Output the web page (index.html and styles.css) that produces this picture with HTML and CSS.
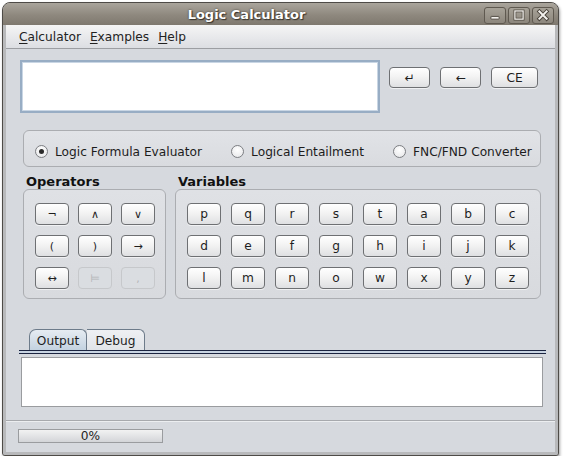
FILE: index.html
```html
<!DOCTYPE html>
<html>
<head>
<meta charset="utf-8">
<title>Logic Calculator</title>
<link rel="stylesheet" href="styles.css">
</head>
<body>
<div class="window">
  <div class="titlebar">
    <div class="title">Logic Calculator</div>
    <div class="wbtns">
      <span class="wbtn"><svg width="22" height="17" viewBox="0 0 22 17"><rect x="6.5" y="9.5" width="9" height="3" rx="0.5" fill="#f4f2ee" stroke="#4a443c"/></svg></span>
      <span class="wbtn"><svg width="22" height="17" viewBox="0 0 22 17"><rect x="6.5" y="3.5" width="9" height="9" fill="none" stroke="#4a443c" stroke-width="3"/><rect x="6.5" y="3.5" width="9" height="9" fill="none" stroke="#f4f2ee" stroke-width="1.4"/></svg></span>
      <span class="wbtn"><svg width="22" height="17" viewBox="0 0 22 17"><path d="M7 4 L15 12 M15 4 L7 12" stroke="#4a443c" stroke-width="4.2" stroke-linecap="square"/><path d="M7 4 L15 12 M15 4 L7 12" stroke="#f4f2ee" stroke-width="2.2" stroke-linecap="square"/></svg></span>
    </div>
  </div>
  <div class="frame">
    <div class="client">
      <div class="menubar">
        <span class="mi"><u>C</u>alculator</span>
        <span class="mi"><u>E</u>xamples</span>
        <span class="mi"><u>H</u>elp</span>
      </div>
      <div class="content">
        <div class="row1">
          <div class="input"></div>
          <div class="topbtns">
            <div class="btn w41">↵</div>
            <div class="btn w41">←</div>
            <div class="btn w47">CE</div>
          </div>
        </div>
        <div class="modes">
          <div class="radio"><span class="dot on"></span><span>Logic Formula Evaluator</span></div>
          <div class="radio"><span class="dot"></span><span>Logical Entailment</span></div>
          <div class="radio"><span class="dot"></span><span>FNC/FND Converter</span></div>
        </div>
        <div class="pads">
          <div class="col ops">
            <div class="lbl">Operators</div>
            <div class="panel grid3">
              <div class="btn sym">¬</div><div class="btn sym">∧</div><div class="btn sym">∨</div>
              <div class="btn sym">(</div><div class="btn sym">)</div><div class="btn sym">→</div>
              <div class="btn sym">↔</div><div class="btn dis">⊨</div><div class="btn dis">,</div>
            </div>
          </div>
          <div class="col vars">
            <div class="lbl">Variables</div>
            <div class="panel grid8">
              <div class="btn">p</div><div class="btn">q</div><div class="btn">r</div><div class="btn">s</div><div class="btn">t</div><div class="btn">a</div><div class="btn">b</div><div class="btn">c</div>
              <div class="btn">d</div><div class="btn">e</div><div class="btn">f</div><div class="btn">g</div><div class="btn">h</div><div class="btn">i</div><div class="btn">j</div><div class="btn">k</div>
              <div class="btn">l</div><div class="btn">m</div><div class="btn">n</div><div class="btn">o</div><div class="btn">w</div><div class="btn">x</div><div class="btn">y</div><div class="btn">z</div>
            </div>
          </div>
        </div>
        <div class="tabs">
          <div class="tab sel">Output</div>
          <div class="tab">Debug</div>
        </div>
        <div class="tabline"></div>
        <div class="output"></div>
      </div>
      <div class="status">
        <div class="progress">0%</div>
      </div>
    </div>
  </div>
</div>
</body>
</html>
```
FILE: styles.css
```css
* { box-sizing: border-box; }
html, body { margin: 0; padding: 0; background: #ffffff; }
body { font-family: "DejaVu Sans", "Liberation Sans", sans-serif; font-size: 12.2px; color: #1c1c1c; }

.window {
  margin: 2px 0 0 2px;
  width: 557px;
  height: 454px;
  border: 1px solid #4e4b47;
  border-radius: 8px 8px 3px 3px;
  overflow: hidden;
  display: flex;
  flex-direction: column;
  box-shadow: 1px 2px 3px rgba(0,0,0,0.35);
  background: #b3b3b3;
}

.titlebar {
  height: 22px;
  flex: none;
  display: flex;
  align-items: center;
  background: linear-gradient(#aaa59c, #8e887e 55%, #7f796f);
  position: relative;
}
.title {
  flex: 1;
  text-align: center;
  font-weight: bold;
  font-size: 13px;
  color: #ffffff;
  text-shadow: 0 0 2px #3a352e, 1px 1px 1px #3a352e;
  padding-left: 6px;
  padding-top: 1px;
}
.wbtns { display: flex; gap: 2px; padding-right: 4px; padding-top: 2px; }
.wbtn {
  width: 22px;
  height: 17px;
  border: 1px solid #5f5950;
  border-radius: 3px;
  background: linear-gradient(#a7a298, #8d877d);
  display: flex;
  align-items: center;
  justify-content: center;
}
.wbtn svg { display: block; }

.frame {
  flex: 1;
  display: flex;
  padding: 0 3px 3px 3px;
  background: #b8b9bb;
}
.client {
  flex: 1;
  display: flex;
  flex-direction: column;
  background: #d6d9de;
}

.menubar {
  height: 24px;
  flex: none;
  display: flex;
  align-items: center;
  gap: 9px;
  padding-left: 13px;
  background: linear-gradient(#f5f5f5, #e6e7ea 60%, #dcdee2);
  border-bottom: 1px solid #9c9ea2;
  color: #222;
}
.mi u { text-decoration: underline; text-underline-offset: 2px; }

.content {
  flex: 1;
  display: flex;
  flex-direction: column;
  padding-top: 11px;
}

.row1 { display: flex; margin-left: 14px; height: 53px; }
.input {
  width: 360px;
  height: 53px;
  background: #ffffff;
  border: 2px solid #98adc4;
  box-shadow: inset 0 0 0 1px #c9d6e4;
}
.topbtns { display: flex; gap: 10px; margin-left: 9px; margin-top: 7px; height: 21px; }

.btn {
  height: 22px;
  border: 1px solid #6e7073;
  border-radius: 4px;
  background: linear-gradient(#ffffff, #f3f3f3 45%, #dfe0e2);
  display: flex;
  align-items: center;
  justify-content: center;
  color: #1e1e1e;
  box-shadow: 0 1px 0 rgba(255,255,255,0.6);
}
.topbtns .btn { height: 21px; }
.w41 { width: 41px; }
.w47 { width: 47px; }
.sym { font-size: 11px; }
.btn.dis {
  border-color: #c6c8cb;
  background: #dadde1;
  color: #b3b5b8;
  box-shadow: none;
  font-size: 11px;
}

.modes {
  margin: 17px 0 0 17px;
  width: 518px;
  height: 37px;
  border: 1px solid #abadb1;
  border-radius: 6px;
  background: linear-gradient(#e1e3e7, #d9dbdf);
  display: flex;
  align-items: center;
  gap: 29px;
  padding-left: 11px;
  padding-top: 6px;
}
.radio { display: flex; align-items: center; gap: 7px; }
.dot {
  width: 13px;
  height: 13px;
  border-radius: 50%;
  border: 1px solid #7c7e82;
  background: radial-gradient(circle at 50% 35%, #ffffff, #e4e5e7);
  position: relative;
}
.dot.on::after {
  content: "";
  position: absolute;
  left: 3px;
  top: 3px;
  width: 5px;
  height: 5px;
  border-radius: 50%;
  background: #2a2a2a;
}

.pads { display: flex; gap: 9px; margin-left: 17px; }
.col { display: flex; flex-direction: column; }
.ops { width: 143px; }
.vars { width: 366px; }
.lbl {
  height: 22px;
  display: flex;
  align-items: flex-end;
  line-height: 15px;
  font-weight: bold;
  font-size: 13px;
  padding-left: 3px;
  color: #111;
}
.panel {
  height: 110px;
  border: 1px solid #abadb1;
  border-radius: 6px;
  background: linear-gradient(#dfe1e5, #d8dade);
  display: grid;
  grid-template-rows: repeat(3, 22px);
  row-gap: 10px;
  padding: 13px 0 0 11px;
}
.grid3 { grid-template-columns: repeat(3, 34px); column-gap: 9px; }
.grid8 { grid-template-columns: repeat(8, 34px); column-gap: 10px; }

.tabs { display: flex; margin: 30px 0 0 23px; height: 21px; }
.tab {
  width: 58px;
  height: 21px;
  border: 1px solid #6d7b8a;
  border-bottom: none;
  border-radius: 6px 5px 0 0;
  display: flex;
  align-items: center;
  justify-content: center;
  color: #1e1e1e;
  background: linear-gradient(#eef0f3, #e1e4e8);
  padding-top: 1px;
}
.tab.sel {
  background: linear-gradient(#e6ecf2, #c3d2e0);
  border-radius: 7px 6px 0 0;
}
.tab + .tab { border-left: none; border-radius: 0 6px 0 0; }

.tabline {
  margin: 0 9px 0 13px;
  height: 4px;
  border-top: 1px solid #1b2440;
  border-bottom: 1px solid #1b2440;
  background: #c8d4e2;
}
.output {
  margin: 3px 0 0 15px;
  width: 522px;
  height: 50px;
  background: #ffffff;
  border: 1px solid #9a9c9f;
}

.status {
  height: 32px;
  flex: none;
  border-top: 1px solid #a7a9ad;
  box-shadow: inset 0 1px 0 #eceef0;
  padding: 8px 0 0 12px;
}
.progress {
  width: 145px;
  height: 14px;
  border: 1px solid #9a9c9f;
  background: linear-gradient(#f2f2f2, #e3e4e6 50%, #d3d5d8);
  line-height: 12px;
  text-align: center;
  color: #222;
}
```
